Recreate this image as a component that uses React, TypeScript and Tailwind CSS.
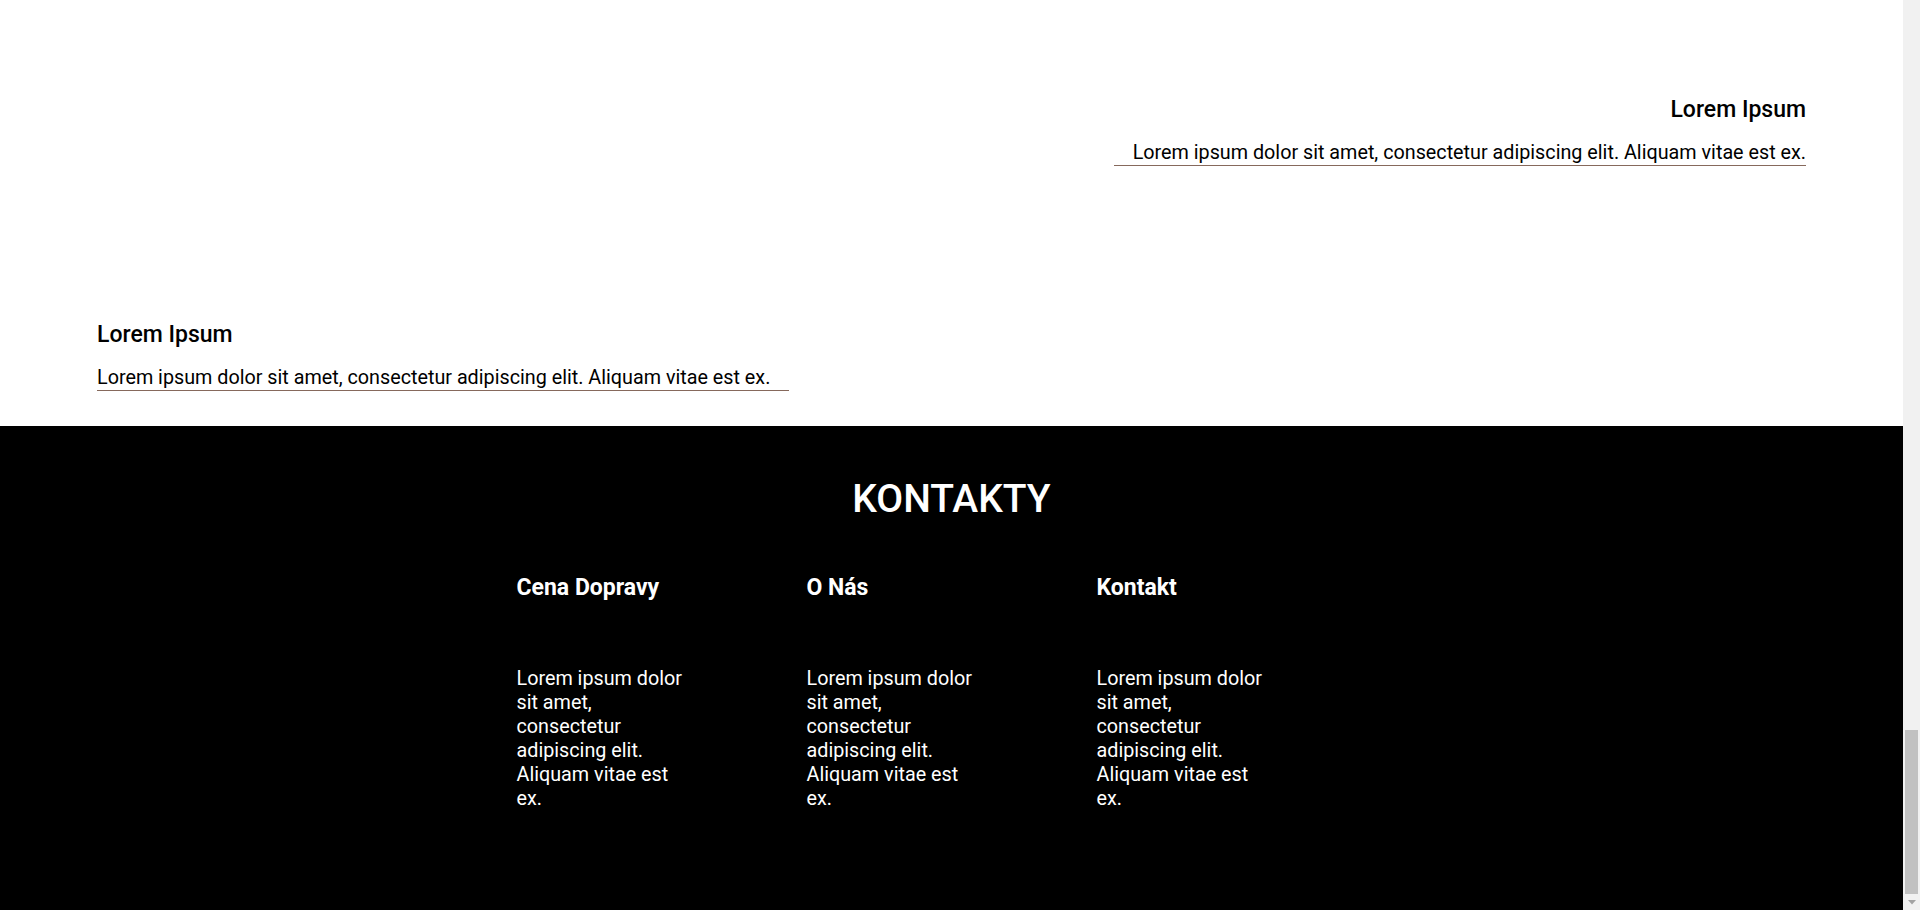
const items = [
  { title: 'Lorem Ipsum', text: 'Lorem ipsum dolor sit amet, consectetur adipiscing elit. Aliquam vitae est ex.', side: 'right' },
  { title: 'Lorem Ipsum', text: 'Lorem ipsum dolor sit amet, consectetur adipiscing elit. Aliquam vitae est ex.', side: 'left' },
];

const columns = [
  { title: 'Cena Dopravy', text: 'Lorem ipsum dolor sit amet, consectetur adipiscing elit. Aliquam vitae est ex.' },
  { title: 'O Nás', text: 'Lorem ipsum dolor sit amet, consectetur adipiscing elit. Aliquam vitae est ex.' },
  { title: 'Kontakt', text: 'Lorem ipsum dolor sit amet, consectetur adipiscing elit. Aliquam vitae est ex.' },
];

function Scrollbar() {
  return (
    <div className="w-[17px] shrink-0 bg-[#f1f1f1] flex flex-col items-center justify-end">
      <div className="w-[13px] h-[164px] bg-[#c1c1c1]" />
      <div className="h-[16px] flex items-center justify-center">
        <svg width="8" height="5" viewBox="0 0 8 5">
          <path d="M0 0h8L4 4.5z" fill="#a3a3a3" />
        </svg>
      </div>
    </div>
  );
}

export default function App() {
  return (
    <div className="h-[910px] flex overflow-hidden bg-white font-['Roboto',sans-serif]">
      <div className="flex-1 flex flex-col min-w-0">
        <section className="px-[97px] pt-[96px] pb-[35px] flex flex-col gap-[155px]">
          {items.map((item, i) => (
            <div
              key={i}
              className={item.side === 'right' ? 'w-[692px] self-end text-right' : 'w-[692px] self-start text-left'}
            >
              <h3 className="text-[23px] leading-[28px] font-medium text-black mb-[17px]">{item.title}</h3>
              <p className="text-[19.75px] leading-[24px] text-black border-b border-[#86695c]">{item.text}</p>
            </div>
          ))}
        </section>

        <footer className="flex-1 bg-black text-white pt-[50px]">
          <h2 className="text-[39px] leading-[47px] font-medium text-center">KONTAKTY</h2>
          <div className="w-[870px] mx-auto mt-[52px] grid grid-cols-3">
            {columns.map((col) => (
              <div key={col.title}>
                <h4 className="text-[23px] leading-[26px] font-bold">{col.title}</h4>
                <p className="w-[175px] mt-[66px] text-[19.75px] leading-[24px]">{col.text}</p>
              </div>
            ))}
          </div>
        </footer>
      </div>
      <Scrollbar />
    </div>
  );
}
